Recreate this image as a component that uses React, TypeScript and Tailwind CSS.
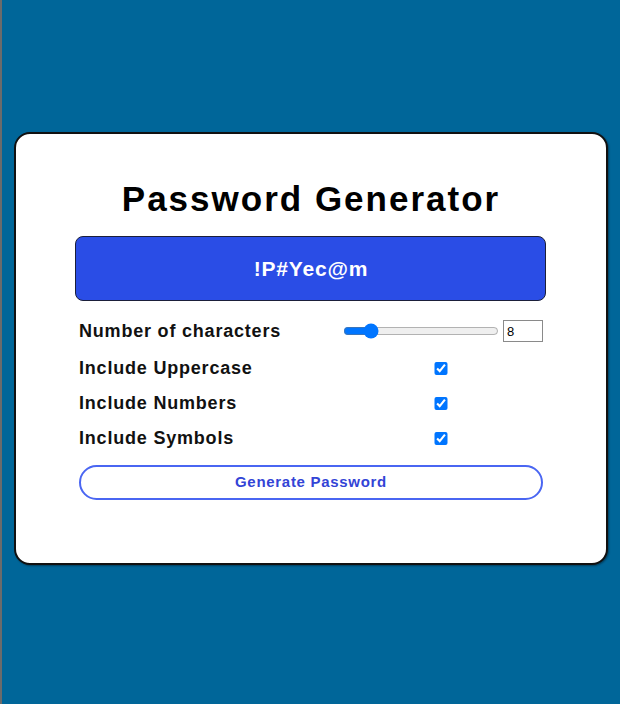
export default function App() {
  return (
    <div className="min-h-screen border-l-2 border-[#6b6b6b] bg-[#006699] flex items-center justify-center font-['Liberation_Sans',Arial,sans-serif]">
      <div className="w-[96%] -mt-[7px] bg-white border-2 border-[#111] rounded-[16px] pt-[45px] pb-[63px] shadow-[1px_1px_2px_rgba(0,0,0,0.4)]">
        <h1 className="text-center text-[35px] leading-[40px] font-bold tracking-[2px] text-black">
          Password Generator
        </h1>

        <div className="w-[471px] h-[65px] mx-auto mt-[17px] bg-[#2a4de6] border border-[#1b1f3a] rounded-[8px] flex items-center justify-center">
          <span className="text-white text-[21px] font-bold tracking-[0.8px]">!P#Yec@m</span>
        </div>

        <div className="w-[464px] mx-auto mt-[17px] text-[18px] font-bold tracking-[0.8px] text-[#111]">
          <div className="h-[26px] flex items-center justify-between">
            <label>Number of characters</label>
            <div className="w-[200px] flex items-center gap-[4px]">
              <input
                type="range"
                min={4}
                max={32}
                defaultValue={8}
                className="w-[156px] accent-[#0075ff]"
              />
              <input
                type="number"
                defaultValue={8}
                className="w-[40px] h-[22px] border border-[#8a8a8a] px-[3px] text-[13px] font-normal tracking-normal text-black"
              />
            </div>
          </div>
          <div className="mt-[11px] space-y-[9px]">
            {["Include Uppercase", "Include Numbers", "Include Symbols"].map((label) => (
              <div key={label} className="h-[26px] flex items-center justify-between">
                <label>{label}</label>
                <div className="w-[200px] flex justify-center pr-[4px]">
                  <input type="checkbox" defaultChecked className="w-[14px] h-[13px] accent-[#0075ff]" />
                </div>
              </div>
            ))}
          </div>
        </div>

        <button className="block w-[464px] h-[35px] mx-auto mt-[14px] rounded-full border-2 border-[#4a66f2] bg-white text-[#3344d6] text-[15px] font-bold tracking-[0.7px]">
          Generate Password
        </button>
      </div>
    </div>
  );
}
